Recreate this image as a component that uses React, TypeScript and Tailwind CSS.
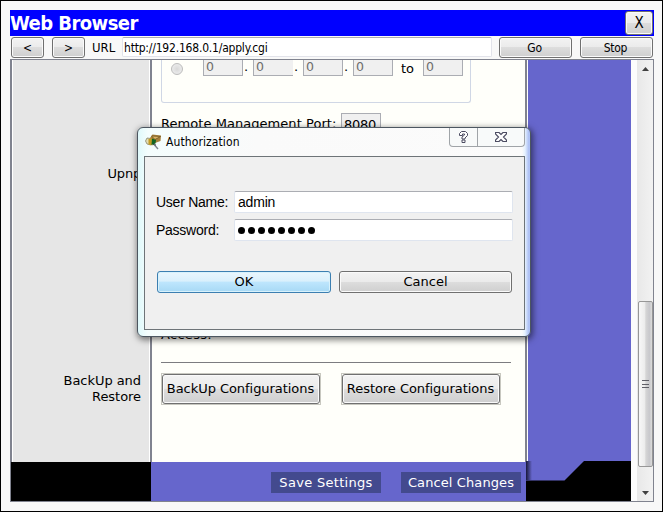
import React from 'react';

const verdana = "font-['DejaVu_Sans',sans-serif]";
const tahoma = "font-['DejaVu_Sans_Condensed','DejaVu_Sans',sans-serif]";
const arial = "font-['Liberation_Sans',sans-serif]";

const face =
  'flex items-center justify-center whitespace-nowrap rounded-[3px] border border-[#707070] bg-[linear-gradient(#f3f3f3_0%,#ebebeb_48%,#dddddd_50%,#cfcfcf_100%)] shadow-[inset_0_0_0_1px_#fafafa]';

function Octet({ className = '' }: { className?: string }) {
  return (
    <div className={`h-[16px] border border-t-0 border-[#abadb3] bg-[#f0f0f0] pl-[2px] text-[12.5px] leading-[13px] text-[#6d6d6d] ${className}`}>
      0
    </div>
  );
}

function Dot() {
  return <span className="w-[10px] pl-px leading-[14px]">.</span>;
}

function TitleBar() {
  return (
    <div className="flex h-[26px] items-start justify-between bg-[#0000ff] pr-px pt-px">
      <span className={`whitespace-nowrap text-[20px] font-bold leading-[24px] tracking-[-0.55px] text-white ${tahoma}`}>Web Browser</span>
      <button className={`${face} h-[24px] w-[28px] text-[15px] ${tahoma}`}>X</button>
    </div>
  );
}

function Toolbar() {
  return (
    <div className={`flex h-[23px] items-start pl-px pt-px text-[12px] ${tahoma}`}>
      <button className={`${face} h-[21px] w-[33px]`}>&lt;</button>
      <button className={`${face} ml-[8px] h-[21px] w-[33px]`}>&gt;</button>
      <span className="w-[37px] whitespace-nowrap pl-[7px] text-[13px] leading-[21px]">URL</span>
      <div className="h-[20px] w-[370px] whitespace-nowrap rounded-[2px] border border-[#e2e3ea] border-t-[#abadb3] bg-white pl-px leading-[20px] tracking-[-0.2px]">
        http://192.168.0.1/apply.cgi
      </div>
      <button className={`${face} ml-[7px] h-[21px] w-[73px] pr-[2px] tracking-[-0.3px]`}>Go</button>
      <button className={`${face} ml-[8px] h-[21px] w-[73px] pr-[2px] tracking-[-0.3px]`}>Stop</button>
    </div>
  );
}

function Sidebar() {
  return (
    <div className="flex w-[139px] shrink-0 flex-col border-l border-[#80838f]">
      <div className="h-full border-x border-white bg-[#e6e6e6] pr-[8px] text-right">
        <div className="mt-[106px] h-[16px] leading-[16px] tracking-[-0.2px]">Upnp</div>
        <div className="mt-[191px] leading-[16px] tracking-[-0.05px]">
          BackUp and
          <br />
          Restore
        </div>
      </div>
    </div>
  );
}

function Settings() {
  return (
    <div className="flex-1 border-l-2 border-[#80838f] bg-[#fffffa] pl-[9px]">
      <div className="flex h-[43px] w-[310px] items-start rounded-b-[3px] border border-t-0 border-[#d0d7e5]">
        <span className="ml-[9px] mt-[3px] h-[12px] w-[12px] rounded-full border border-[#bcbcbc] bg-[radial-gradient(#d8d8d8,#f2f2f2)]" />
        <Octet className="ml-[20px] w-[40px]" />
        <Dot />
        <Octet className="w-[40px] border-r-0" />
        <Dot />
        <Octet className="w-[40px]" />
        <Dot />
        <Octet className="w-[40px]" />
        <span className="w-[30px] pl-[8px] leading-[17px]">to</span>
        <Octet className="w-[40px]" />
      </div>
      <div className="mt-[10px] flex h-[21px] items-start whitespace-nowrap">
        <span className="w-[180px] leading-[22px] tracking-[0.05px]">Remote Management Port:</span>
        <div className="h-[21px] w-[40px] border border-[#abadb3] bg-[#f0f0f0] pl-[2px] leading-[21px] tracking-[-0.3px]">8080</div>
      </div>
      <div className="mt-[193px] h-[16px] leading-[16px] tracking-[0.3px]">Access:</div>
      <div className="mt-[19px] h-px w-[350px] bg-[#7c7c80]" />
      <div className="mt-[10px] flex gap-[20px] tracking-[-0.05px]">
        <div className="border border-[#c8c8c0]">
          <button className={`${face} h-[30px] w-[158px] pr-px`}>BackUp Configurations</button>
        </div>
        <div className="border border-[#c8c8c0]">
          <button className={`${face} h-[30px] w-[158px] pr-px`}>Restore Configurations</button>
        </div>
      </div>
    </div>
  );
}

function ScrollBar() {
  return (
    <div className="flex w-[16px] flex-col items-center bg-[linear-gradient(90deg,#e8e8e8,#f2f2f2)]">
      <svg className="mt-[7px] h-[4px] w-[7px]" viewBox="0 0 7 4">
        <path d="M0 4L3.500 0L7 4Z" fill="#404040" />
      </svg>
      <div className="mt-[230px] flex h-[166px] w-[15px] items-center justify-center rounded-[2px] border border-[#979797] bg-[linear-gradient(90deg,#f8f8f8_0%,#ececec_45%,#d6d6d6_52%,#c8c8cc_80%,#dcdcdc_100%)]">
        <div className="flex h-[8px] w-[7px] flex-col justify-between">
          <i className="h-px bg-[#606068]" />
          <i className="h-px bg-[#606068]" />
          <i className="h-px bg-[#606068]" />
        </div>
      </div>
      <svg className="mt-[24px] h-[4px] w-[7px]" viewBox="0 0 7 4">
        <path d="M0 0L3.500 4L7 0Z" fill="#404040" />
      </svg>
    </div>
  );
}

function Page() {
  return (
    <div className={`flex h-[443px] overflow-hidden border border-[#80838f] bg-[#fbfbfb] text-[13px] ${verdana}`}>
      <div className="flex w-[515px] flex-col">
        <div className="flex h-[402px]">
          <Sidebar />
          <div className="flex flex-1 border-r border-[#80838f]">
            <Settings />
          </div>
        </div>
        <div className="flex h-[39px]">
          <div className="w-[140px] bg-black" />
          <div className="flex flex-1 justify-end gap-[20px] bg-[#6666cc] pr-[5px] pt-[10px] text-white">
            <button className="h-[21px] w-[110px] whitespace-nowrap bg-[#434a8e] leading-[21px] tracking-[0.3px]">Save Settings</button>
            <button className="h-[21px] w-[120px] whitespace-nowrap bg-[#434a8e] leading-[21px] tracking-[0.1px]">Cancel Changes</button>
          </div>
        </div>
      </div>
      <div className="w-[105px]">
        <div className="h-[401px] border-l border-[#80838f]">
          <div className="h-full border-l border-white bg-[#6666cc]" />
        </div>
        <svg className="block h-[40px] w-[105px]" viewBox="0 0 105 40">
          <defs>
            <linearGradient id="edge">
              <stop offset="0" stopColor="#18183a" />
              <stop offset="1" stopColor="#6666cc" />
            </linearGradient>
          </defs>
          <rect width="105" height="40" fill="#000" />
          <path d="M0 0H58L38.500 19.500H0Z" fill="#6666cc" />
          <rect width="6" height="19" fill="url(#edge)" />
        </svg>
      </div>
      <div className="w-[6px] bg-[#fcfcfc]" />
      <ScrollBar />
    </div>
  );
}

function AppIcon() {
  return (
    <svg className="h-[16px] w-[17px]" viewBox="0 0 17 16">
      <path d="M5 4L7.500 0.500L16 1.500L15.500 7L10 9L5 7Z" fill="#a5803c" />
      <path d="M6.500 2L15.500 2.500L10 5.500Z" fill="#d9b568" stroke="#6b4d1c" strokeWidth=".7" />
      <path d="M0.500 7L2 4L6 4.500V11L2 10Z" fill="#e3dfb4" stroke="#77745a" strokeWidth=".7" />
      <path d="M3.500 5L7.500 4V11.500L3.500 10.500Z" fill="#c29a20" />
      <path d="M7 4.500L11 6L10.500 9.500L6.500 11Z" fill="#126522" />
      <path d="M9.500 11L13 15" stroke="#7d848c" strokeWidth="1.400" />
      <path d="M8 10.500L11 11" stroke="#3c4248" />
    </svg>
  );
}

function Authorization() {
  const input = 'h-[22px] w-[279px] rounded-[2px] border border-[#dfe5ef] border-t-[#abadb3] bg-white pl-[3px]';
  return (
    <div className="absolute left-[137px] top-[127px] h-[210px] w-[394px] rounded-[6px] border border-[#4c5660] bg-[linear-gradient(90deg,#dff9fb_0px,#f4fdfd_10px,#fafafa_120px,#fbfbfb_384px,#e6f2ff_387px,#a9bdf4_391px,#d5e2ff_394px)] shadow-[1px_2px_6px_1px_rgba(0,0,0,0.5)]">
      <div className="flex h-[28px] items-start">
        <div className="ml-[7px] mt-[6px]">
          <AppIcon />
        </div>
        <span className={`ml-[4px] mt-[6px] w-[283px] whitespace-nowrap text-[12px] leading-[16px] tracking-[0.1px] ${tahoma}`}>Authorization</span>
        <div className="flex h-[19px] w-[76px] rounded-b-[4px] border border-t-0 border-[#a0a4a8] bg-[#f8fafa]">
          <div className="flex w-[28px] items-center justify-center border-r border-[#a0a4a8]">
            <svg className="h-[12px] w-[9px]" viewBox="0 0 9 12">
              <path d="M.5 4V2.500L2.500 .5H6.500L8.500 2.500V4.500L6 7V8H3V6L5.500 4V3H3.500V4.500H.5ZM3 9H6V11.500H3Z" fill="#fff" stroke="#4c4c62" />
            </svg>
          </div>
          <div className="flex flex-1 items-center justify-center">
            <svg className="h-[10px] w-[12px]" viewBox="0 0 12 10">
              <path d="M.5 .5H4L6 2.500L8 .5H11.500V2L8.500 5L11.500 8V9.500H8L6 7.500L4 9.500H.5V8L3.500 5L.5 2V.5Z" fill="#fff" stroke="#4c4c62" strokeWidth="1.200" />
            </svg>
          </div>
        </div>
      </div>
      <div className={`ml-[6px] h-[174px] w-[381px] border border-[#6e7478] bg-[#f0f0f0] pl-[11px] pt-[34px] text-[14px] ${arial}`}>
        <div className="flex h-[22px]">
          <span className="w-[78px] whitespace-nowrap leading-[22px] tracking-[-0.25px]">User Name:</span>
          <div className={`${input} leading-[20px] tracking-[-0.2px]`}>admin</div>
        </div>
        <div className="mt-[6px] flex h-[22px]">
          <span className="w-[78px] whitespace-nowrap leading-[22px] tracking-[-0.25px]">Password:</span>
          <div className={`${input} flex items-center gap-[3px]`}>
            {[0, 1, 2, 3, 4, 5, 6, 7].map((i) => (
              <i key={i} className="mt-px h-[7px] w-[7px] rounded-full bg-black" />
            ))}
          </div>
        </div>
        <div className={`ml-px mt-[30px] flex gap-[8px] text-[13px] ${verdana}`}>
          <button className="flex h-[22px] w-[174px] items-center justify-center rounded-[3px] border border-[#3c7fb1] bg-[linear-gradient(#e9f6fd_0%,#d9f0fc_46%,#bee6fd_50%,#a7d9f5_100%)] shadow-[inset_0_0_0_1px_#d8f2fc]">OK</button>
          <button className={`${face} h-[22px] w-[173px]`}>Cancel</button>
        </div>
      </div>
    </div>
  );
}

export default function App() {
  return (
    <div className="relative h-[512px] w-[663px] overflow-hidden border border-black bg-[#f8f8f8] pl-[9px] pt-[9px] text-black">
      <div className="w-[644px]">
        <TitleBar />
        <Toolbar />
        <Page />
      </div>
      <div className="absolute -left-px -top-px">
        <Authorization />
      </div>
    </div>
  );
}
